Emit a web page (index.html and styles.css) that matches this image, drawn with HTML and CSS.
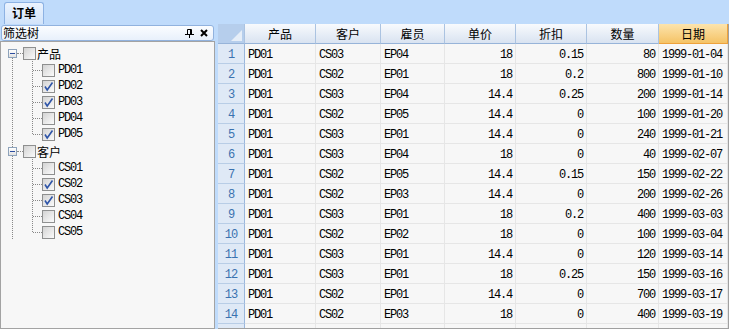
FILE: index.html
```html
<!DOCTYPE html>
<html lang="zh-CN">
<head>
    <meta charset="UTF-8">
    <title>订单</title>
    <link rel="stylesheet" href="styles.css">
</head>
<body>
    <div class="tabbar">
        <div class="tab">订单</div>
    </div>

    <div class="main">
        <div class="side">
            <div class="side-head">
                <span class="title">筛选树</span>
                <svg class="pin" width="9" height="9" viewBox="0 0 9 9">
                    <path d="M2.5 0.5h4v5h-4z M0 5.5h9 M4.5 6v3" stroke="#000" fill="none"/>
                    <path d="M5 1h1.5v4.5H5z" fill="#000"/>
                </svg>
                <svg class="close" width="8" height="8" viewBox="0 0 8 8">
                    <path d="M1 1L7 7M7 1L1 7" stroke="#000" stroke-width="2"/>
                </svg>
            </div>

            <ul class="tree">
                <li class="root">
                    <div class="node"><span class="exp"></span><span class="chk"></span><span class="label">产品</span></div>
                    <ul class="kids">
                        <li><div class="node"><span class="chk"></span><span class="label code">PD01</span></div></li>
                        <li><div class="node"><span class="chk"><svg width="11" height="11" viewBox="0 0 11 11"><path d="M2 5.5L4.2 9L9.5 1.5" stroke="#2f55a8" stroke-width="1.6" fill="none"/></svg></span><span class="label code">PD02</span></div></li>
                        <li><div class="node"><span class="chk"><svg width="11" height="11" viewBox="0 0 11 11"><path d="M2 5.5L4.2 9L9.5 1.5" stroke="#2f55a8" stroke-width="1.6" fill="none"/></svg></span><span class="label code">PD03</span></div></li>
                        <li><div class="node"><span class="chk"></span><span class="label code">PD04</span></div></li>
                        <li><div class="node"><span class="chk"><svg width="11" height="11" viewBox="0 0 11 11"><path d="M2 5.5L4.2 9L9.5 1.5" stroke="#2f55a8" stroke-width="1.6" fill="none"/></svg></span><span class="label code">PD05</span></div></li>
                    </ul>
                </li>
                <li class="root">
                    <div class="node"><span class="exp"></span><span class="chk"></span><span class="label">客户</span></div>
                    <ul class="kids">
                        <li><div class="node"><span class="chk"></span><span class="label code">CS01</span></div></li>
                        <li><div class="node"><span class="chk"><svg width="11" height="11" viewBox="0 0 11 11"><path d="M2 5.5L4.2 9L9.5 1.5" stroke="#2f55a8" stroke-width="1.6" fill="none"/></svg></span><span class="label code">CS02</span></div></li>
                        <li><div class="node"><span class="chk"><svg width="11" height="11" viewBox="0 0 11 11"><path d="M2 5.5L4.2 9L9.5 1.5" stroke="#2f55a8" stroke-width="1.6" fill="none"/></svg></span><span class="label code">CS03</span></div></li>
                        <li><div class="node"><span class="chk"></span><span class="label code">CS04</span></div></li>
                        <li><div class="node"><span class="chk"></span><span class="label code">CS05</span></div></li>
                    </ul>
                </li>
            </ul>
        </div>

        <div class="grid">
            <table>
                <colgroup>
                    <col style="width: 27px">
                    <col style="width: 71px">
                    <col style="width: 65px">
                    <col style="width: 64px">
                    <col style="width: 71px">
                    <col style="width: 71px">
                    <col style="width: 72px">
                    <col style="width: 69px">
                </colgroup>
                <thead>
                    <tr>
                        <th class="corner"></th>
                        <th>产品</th>
                        <th>客户</th>
                        <th>雇员</th>
                        <th>单价</th>
                        <th>折扣</th>
                        <th>数量</th>
                        <th class="sorted">日期</th>
                    </tr>
                </thead>
                <tbody>
                    <tr><th class="rh">1</th><td>PD01</td><td>CS03</td><td>EP04</td><td class="num">18</td><td class="num">0.15</td><td class="num">80</td><td>1999-01-04</td></tr>
                    <tr><th class="rh">2</th><td>PD01</td><td>CS02</td><td>EP01</td><td class="num">18</td><td class="num">0.2</td><td class="num">800</td><td>1999-01-10</td></tr>
                    <tr><th class="rh">3</th><td>PD01</td><td>CS03</td><td>EP04</td><td class="num">14.4</td><td class="num">0.25</td><td class="num">200</td><td>1999-01-14</td></tr>
                    <tr><th class="rh">4</th><td>PD01</td><td>CS02</td><td>EP05</td><td class="num">14.4</td><td class="num">0</td><td class="num">100</td><td>1999-01-20</td></tr>
                    <tr><th class="rh">5</th><td>PD01</td><td>CS03</td><td>EP01</td><td class="num">14.4</td><td class="num">0</td><td class="num">240</td><td>1999-01-21</td></tr>
                    <tr><th class="rh">6</th><td>PD01</td><td>CS03</td><td>EP04</td><td class="num">18</td><td class="num">0</td><td class="num">40</td><td>1999-02-07</td></tr>
                    <tr><th class="rh">7</th><td>PD01</td><td>CS02</td><td>EP05</td><td class="num">14.4</td><td class="num">0.15</td><td class="num">150</td><td>1999-02-22</td></tr>
                    <tr><th class="rh">8</th><td>PD01</td><td>CS02</td><td>EP03</td><td class="num">14.4</td><td class="num">0</td><td class="num">200</td><td>1999-02-26</td></tr>
                    <tr><th class="rh">9</th><td>PD01</td><td>CS03</td><td>EP01</td><td class="num">18</td><td class="num">0.2</td><td class="num">400</td><td>1999-03-03</td></tr>
                    <tr><th class="rh">10</th><td>PD01</td><td>CS02</td><td>EP02</td><td class="num">18</td><td class="num">0</td><td class="num">100</td><td>1999-03-04</td></tr>
                    <tr><th class="rh">11</th><td>PD01</td><td>CS03</td><td>EP01</td><td class="num">14.4</td><td class="num">0</td><td class="num">120</td><td>1999-03-14</td></tr>
                    <tr><th class="rh">12</th><td>PD01</td><td>CS03</td><td>EP01</td><td class="num">18</td><td class="num">0.25</td><td class="num">150</td><td>1999-03-16</td></tr>
                    <tr><th class="rh">13</th><td>PD01</td><td>CS02</td><td>EP01</td><td class="num">14.4</td><td class="num">0</td><td class="num">700</td><td>1999-03-17</td></tr>
                    <tr><th class="rh">14</th><td>PD01</td><td>CS02</td><td>EP03</td><td class="num">18</td><td class="num">0</td><td class="num">400</td><td>1999-03-19</td></tr>
                    <tr class="stub"><th class="rh"></th><td></td><td></td><td></td><td></td><td></td><td></td><td></td></tr>
                </tbody>
            </table>
        </div>
    </div>
</body>
</html>
```

FILE: styles.css
```css
body {
    margin: 0;
    width: 729px;
    height: 329px;
    overflow: hidden;
    background-color: #bfdbfb;
    font-family: "Noto Sans CJK SC", sans-serif;
    font-size: 12px;
    color: #000;
}

/* tab strip */
.tabbar {
    height: 24px;
    display: flex;
    align-items: flex-end;
    padding-left: 4px;
    box-sizing: border-box;
}

.tab {
    width: 40px;
    height: 22px;
    box-sizing: border-box;
    border: 1px solid #8db2e3;
    border-bottom: none;
    border-radius: 3px 3px 0 0;
    background: linear-gradient(#ebf3fe, #d2e4fa);
    font-weight: bold;
    text-align: center;
    line-height: 20px;
}

.main {
    display: flex;
    gap: 3px;
    height: 305px;
}

/* filter panel */
.side {
    width: 215px;
    padding-top: 1px;
    display: flex;
    flex-direction: column;
}

.side-head {
    height: 16px;
    box-sizing: border-box;
    margin: 0 1px;
    padding: 0 5px 0 1px;
    border: 1px solid #91b2de;
    border-radius: 3px;
    background: linear-gradient(#fbfdff, #e8f0fb);
    display: flex;
    align-items: center;
    line-height: 14px;
}

.side-head .title {
    flex: 1;
}

.side-head .pin {
    margin-right: 6px;
}

.tree {
    flex: 1;
    position: relative;
    margin: 0;
    padding: 2px 0 0;
    list-style: none;
    border: 1px solid #a3a3a3;
    background-color: #f7f7f7;
}

.tree::before {
    content: "";
    position: absolute;
    left: 11px;
    top: 15px;
    height: 182px;
    border-left: 1px dotted #888;
}

.kids {
    position: relative;
    margin: 0;
    padding: 0;
    list-style: none;
}

.kids::before {
    content: "";
    position: absolute;
    left: 31px;
    top: -3px;
    bottom: 8px;
    border-left: 1px dotted #888;
}

.kids li {
    position: relative;
}

.kids li::after {
    content: "";
    position: absolute;
    left: 32px;
    top: 8px;
    width: 9px;
    border-top: 1px dotted #888;
}

.node {
    display: flex;
    align-items: center;
    height: 16px;
    padding-left: 41px;
}

.root > .node {
    height: 18px;
    padding-left: 7px;
}

.exp {
    position: relative;
    z-index: 1;
    width: 9px;
    height: 9px;
    box-sizing: border-box;
    margin-right: 6px;
    border: 1px solid #8ea3bb;
    background: linear-gradient(#fff, #e2e2e2);
}

.exp::before {
    content: "";
    position: absolute;
    left: 1px;
    top: 3px;
    width: 5px;
    height: 1px;
    background-color: #2d4ea0;
}

.exp::after {
    content: "";
    position: absolute;
    left: 8px;
    top: 3px;
    width: 6px;
    border-top: 1px dotted #888;
}

.chk {
    width: 13px;
    height: 13px;
    box-sizing: border-box;
    margin-right: 3px;
    border: 1px solid #8e8f8f;
    background: linear-gradient(135deg, #d3d3d3, #fbfbfb);
    display: flex;
    align-items: center;
    justify-content: center;
}

.root > .node .chk {
    margin-right: 1px;
}

.code {
    font-family: "Liberation Mono", monospace;
    letter-spacing: -1.2px;
}

/* data grid */
.grid {
    flex: 1;
    height: 305px;
    box-sizing: border-box;
    overflow: hidden;
    border-right: 1px solid #a0a0a0;
    border-bottom: 1px solid #a0a0a0;
    background-color: #f7f7f7;
}

table {
    width: 510px;
    table-layout: fixed;
    border-spacing: 0;
}

th, td {
    padding: 0 3px;
    line-height: 19px;
    white-space: nowrap;
    overflow: hidden;
}

thead th {
    font-weight: normal;
    border-right: 1px solid #abc3e1;
    border-bottom: 1px solid #97b4d9;
    background: linear-gradient(#f8fafd, #d9e3f1);
}

thead th.sorted {
    border-color: #eea23c;
    background: linear-gradient(#fce4ad, #f5c366);
}

thead th.corner {
    position: relative;
    background: #b6ceec;
}

thead th.corner::after {
    content: "";
    position: absolute;
    right: 2px;
    bottom: 2px;
    border-left: 11px solid transparent;
    border-bottom: 11px solid #e6eef8;
}

tbody td,
tbody th {
    padding-top: 3px;
    line-height: 16px;
}

td {
    font-family: "Liberation Mono", monospace;
    letter-spacing: -1.2px;
    border-right: 1px solid #e6e6e6;
    border-bottom: 1px solid #e6e6e6;
}

td.num {
    text-align: right;
}

th.rh {
    font-weight: normal;
    font-family: "Liberation Mono", monospace;
    letter-spacing: -1px;
    color: #3a72b0;
    background-color: #dfe9f6;
    border-right: 1px solid #9bb7dc;
    border-bottom: 1px solid #b8cde6;
}

.stub td,
.stub th {
    height: 16px;
}
```
